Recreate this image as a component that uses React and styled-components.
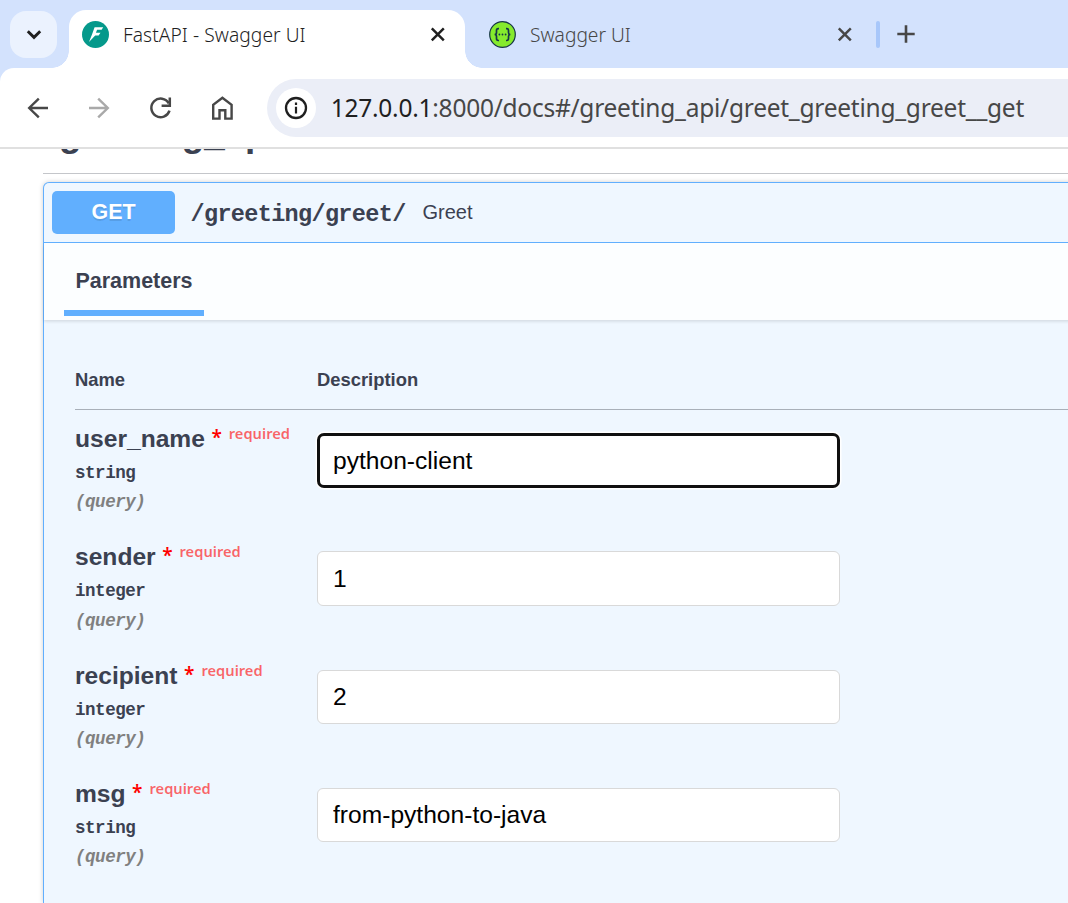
import React from 'react';
import styled, { createGlobalStyle } from 'styled-components';

const GlobalStyle = createGlobalStyle`
  * { box-sizing: border-box; }
  body { margin: 0; overflow: hidden; background: #fff; }
`;

const UI_FONT = '"Noto Sans", "Open Sans", sans-serif';
const SANS = '"Liberation Sans", Arial, sans-serif';
const MONO = '"Liberation Mono", monospace';

const Window = styled.div`
  width: 1068px;
  height: 903px;
  overflow: hidden;
  display: flex;
  flex-direction: column;
  font-family: ${SANS};
  color: #3b4151;
`;

const TabStrip = styled.header`
  flex: none;
  height: 68px;
  display: flex;
  align-items: flex-start;
  background: #d3e2fd;
  padding: 10px 0 0 10px;
`;

const TabSearch = styled.button`
  width: 47px;
  height: 47px;
  margin: 1px 12px 0 0;
  padding: 0;
  border: 0;
  border-radius: 16px;
  background: #ebf2fe;
  display: flex;
  align-items: center;
  justify-content: center;
`;

const Tab = styled.div`
  position: relative;
  display: flex;
  align-items: center;
  width: ${(p) => (p.$active ? 396 : 407)}px;
  height: 58px;
  padding: 0 18px 9px ${(p) => (p.$active ? 13 : 24)}px;
  border-radius: 17px 17px 0 0;
  background: ${(p) => (p.$active ? '#fff' : 'transparent')};
  color: ${(p) => (p.$active ? '#1f1f1f' : '#474747')};
`;

const TabFlare = styled.span`
  position: absolute;
  bottom: 0;
  width: 17px;
  height: 17px;
  ${(p) => (p.$side === 'left' ? 'left: -17px;' : 'right: -17px;')}
  background: radial-gradient(
    circle at ${(p) => (p.$side === 'left' ? '0 0' : '100% 0')},
    transparent 16.5px,
    #fff 17px
  );
`;

const TabTitle = styled.span`
  flex: 1;
  margin-left: 14px;
  font: 300 19.2px/28px ${UI_FONT};
  letter-spacing: ${(p) => p.$track || 0}px;
  white-space: nowrap;
`;

const TabDivider = styled.span`
  width: 4px;
  height: 27px;
  margin: 11px 17px 0 4px;
  border-radius: 2px;
  background: #a8c7fa;
`;

const NewTab = styled.span`
  display: flex;
  margin-top: 15px;
`;

const ToolbarBack = styled.div`
  flex: none;
  background: #d3e2fd;
`;

const Toolbar = styled.nav`
  height: 81px;
  display: flex;
  align-items: center;
  padding: 1px 0 0 22px;
  border-bottom: 2px solid #e0e0e0;
  border-top-left-radius: 14px;
  background: #fff;
`;

const NavButton = styled.span`
  width: 32px;
  height: 32px;
  margin-right: 29.2px;
  display: flex;
  color: ${(p) => (p.$dim ? '#a9a9a9' : '#474747')};
`;

const Omnibox = styled.div`
  flex: 1;
  height: 58px;
  display: flex;
  align-items: center;
  padding-left: 9px;
  border-radius: 29px 0 0 29px;
  background: #ebeef7;
`;

const SiteInfo = styled.span`
  width: 40px;
  height: 40px;
  margin-right: 15px;
  border-radius: 50%;
  background: #fff;
  display: flex;
  align-items: center;
  justify-content: center;
`;

const Url = styled.span`
  font: 400 24.5px/34px ${UI_FONT};
  letter-spacing: -0.25px;
  white-space: nowrap;
  color: #474747;
`;

const Host = styled.span`
  color: #1f1f1f;
`;

const Page = styled.main`
  flex: 1;
  min-height: 0;
  overflow: hidden;
  display: flex;
  flex-direction: column;
  padding-left: 43px;
`;

const TagHeading = styled.h3`
  flex: none;
  height: 56px;
  margin: -31px 0 8px;
  padding-left: 16px;
  border-bottom: 1px solid #c4c6ca;
  font: 700 36.8px/31px ${SANS};
`;

const Operation = styled.section`
  flex: 1;
  width: 1100px;
  border: 1px solid #61affe;
  border-bottom: 0;
  border-radius: 6px 0 0 0;
  background: #eff7ff;
  box-shadow: 0 0 5px rgba(0, 0, 0, 0.19);
`;

const Summary = styled.div`
  display: flex;
  height: 60px;
  padding: 8px 0 0 8px;
  border-bottom: 1px solid #61affe;
`;

const Method = styled.span`
  width: 123px;
  height: 43px;
  border-radius: 5px;
  background: #61affe;
  color: #fff;
  text-align: center;
  text-shadow: 0 1.5px 0 rgba(0, 0, 0, 0.1);
  font: 700 21.4px/42px ${SANS};
`;

const Path = styled.span`
  width: 232px;
  padding-left: 15.5px;
  font: 700 23.5px/48px ${MONO};
  letter-spacing: -0.66px;
`;

const SummaryText = styled.span`
  padding-left: 15.5px;
  font: 400 20px/42px ${SANS};
`;

const SectionHeader = styled.div`
  height: 77px;
  padding-left: 20px;
  background: rgba(255, 255, 255, 0.8);
  box-shadow: 0 1.5px 3px rgba(0, 0, 0, 0.12);
`;

const SectionTab = styled.h4`
  width: 140px;
  height: 73px;
  margin: 0;
  padding-top: 18px;
  border-bottom: 6px solid #61affe;
  text-align: center;
  font: 700 21.5px/40px ${SANS};
`;

const Params = styled.div`
  padding: 45px 0 0 31px;
`;

const Row = styled.div`
  display: grid;
  grid-template-columns: 242px 523px;
`;

const HeadRow = styled(Row)`
  height: 45px;
  margin-bottom: 14px;
  border-bottom: 1px solid #a9b0b9;
  font: 700 18.4px/30px ${SANS};
`;

const ParamRow = styled(Row)`
  height: 118.34px;
  align-items: start;
`;

const ParamName = styled.div`
  display: flex;
  font: 700 24.6px/30px ${SANS};
`;

const Star = styled.span`
  margin-left: 6.5px;
  font: 600 19px/27px ${UI_FONT};
  color: #f00;
`;

const Required = styled.span`
  margin-left: 7px;
  font: 600 14.7px/18px ${UI_FONT};
  color: rgba(255, 0, 0, 0.6);
`;

const ParamType = styled.div`
  margin-top: 4px;
  font: 700 17.5px/30px ${MONO};
  letter-spacing: -0.45px;
`;

const ParamIn = styled.div`
  margin-top: -0.6px;
  font: italic 700 17.5px/30px ${MONO};
  letter-spacing: -0.45px;
  color: #808080;
`;

const Field = styled.input`
  display: block;
  width: 523px;
  height: 54.5px;
  margin-top: 9px;
  padding: 0 15px;
  border: 1px solid #d9d9d9;
  border-radius: 6px;
  outline: none;
  background: #fff;
  color: #000;
  font: 400 24.6px/30px ${SANS};
  ${(p) =>
    p.$focused &&
    `
    height: 55px;
    border: 3px solid #101010;
    border-radius: 7px;
    padding: 0 13px;
    box-shadow: 0 0 0 1.5px #fff;
  `}
`;

const PARAMS = [
  { name: 'user_name', type: 'string', value: 'python-client', focused: true },
  { name: 'sender', type: 'integer', value: '1' },
  { name: 'recipient', type: 'integer', value: '2' },
  { name: 'msg', type: 'string', value: 'from-python-to-java' },
];

function Cross({ color }) {
  return (
    <svg width="18" height="18" viewBox="0 0 18 18" fill="none" stroke={color} strokeWidth="2.5">
      <path d="M2.8 2.3l12 12M14.8 2.3L2.8 14.3" />
    </svg>
  );
}

function FastApiLogo() {
  return (
    <svg width="27" height="27" viewBox="0 0 27 27">
      <circle cx="13.5" cy="13.5" r="13.5" fill="#05998b" />
      <path d="M12.6 6.2h8.6l-1.6 2.5h-4.5l-1.2 3h4.6l-1.9 2.9h-3.4L7 21l2.9-7.2z" fill="#fff" />
    </svg>
  );
}

function SwaggerLogo() {
  return (
    <svg width="27" height="27" viewBox="0 0 27 27">
      <circle cx="13.5" cy="13.5" r="12.8" fill="#85ea2d" stroke="#173647" strokeWidth="1.2" />
      <g fill="none" stroke="#173647" strokeWidth="1.7">
        <path d="M10 7.6H9.2q-1.7 0-1.7 1.8v2q0 2.1-1.9 2.1 1.9 0 1.9 2.1v2q0 1.9 1.7 1.9h.8" />
        <path d="M17 7.6h.8q1.7 0 1.7 1.8v2q0 2.1 1.9 2.1-1.9 0-1.9 2.1v2q0 1.9-1.7 1.9H17" />
      </g>
      <g fill="#173647">
        <circle cx="10.4" cy="13.5" r="0.9" />
        <circle cx="13.5" cy="13.5" r="0.9" />
        <circle cx="16.6" cy="13.5" r="0.9" />
      </g>
    </svg>
  );
}

function Arrow({ forward }) {
  return (
    <svg width="32" height="32" viewBox="0 0 32 32" fill="none" stroke="currentColor" strokeWidth="2.4">
      <path
        d="M26 16H7.5M16.8 6.6L7.2 16l9.6 9.4"
        transform={forward ? 'translate(32 0) scale(-1 1)' : undefined}
      />
    </svg>
  );
}

export default function App() {
  return (
    <Window>
      <GlobalStyle />
      <TabStrip>
        <TabSearch>
          <svg width="18" height="18" viewBox="0 0 18 18" fill="none" stroke="#1f1f1f" strokeWidth="2.9">
            <path d="M2.8 5.3L9 11.4l6.2-6.1" />
          </svg>
        </TabSearch>
        <Tab $active>
          <TabFlare $side="left" />
          <FastApiLogo />
          <TabTitle $track={0.06}>FastAPI - Swagger UI</TabTitle>
          <Cross color="#1f1f1f" />
          <TabFlare $side="right" />
        </Tab>
        <Tab>
          <SwaggerLogo />
          <TabTitle>Swagger UI</TabTitle>
          <Cross color="#474747" />
        </Tab>
        <TabDivider />
        <NewTab>
          <svg width="18" height="18" viewBox="0 0 18 18" fill="none" stroke="#474747" strokeWidth="2.6">
            <path d="M9 .3v17.4M.3 9h17.4" />
          </svg>
        </NewTab>
      </TabStrip>
      <ToolbarBack>
        <Toolbar>
          <NavButton>
            <Arrow />
          </NavButton>
          <NavButton $dim>
            <Arrow forward />
          </NavButton>
          <NavButton>
            <svg width="32" height="32" viewBox="0 0 32 32" fill="none" stroke="currentColor" strokeWidth="2.5">
              <path d="M25.5 18.6A9.3 9.3 0 1 1 24.8 11.4" />
              <path d="M25.8 5.6v8.1h-8.2" />
            </svg>
          </NavButton>
          <NavButton>
            <svg width="32" height="32" viewBox="0 0 32 32" fill="none" stroke="currentColor" strokeWidth="2.4">
              <path d="M7.2 26.6V12.8L16.4 5.8l9.2 7v13.8h-6.3v-8.4h-5.8v8.4z" />
            </svg>
          </NavButton>
          <Omnibox>
            <SiteInfo>
              <svg width="24" height="24" viewBox="0 0 24 24">
                <circle cx="12" cy="12" r="10" fill="none" stroke="#1f1f1f" strokeWidth="2.3" />
                <path d="M10.9 10.8h2.2v6.6h-2.2zM10.9 6.6h2.2v2.3h-2.2z" fill="#1f1f1f" />
              </svg>
            </SiteInfo>
            <Url>
              <Host>127.0.0.1</Host>:8000/docs#/greeting_api/greet_greeting_greet__get
            </Url>
          </Omnibox>
        </Toolbar>
      </ToolbarBack>
      <Page>
        <TagHeading>greeting_api</TagHeading>
        <Operation>
          <Summary>
            <Method>GET</Method>
            <Path>/greeting/greet/</Path>
            <SummaryText>Greet</SummaryText>
          </Summary>
          <SectionHeader>
            <SectionTab>Parameters</SectionTab>
          </SectionHeader>
          <Params>
            <HeadRow>
              <span>Name</span>
              <span>Description</span>
            </HeadRow>
            {PARAMS.map((p) => (
              <ParamRow key={p.name}>
                <div>
                  <ParamName>
                    {p.name}
                    <Star>*</Star>
                    <Required>required</Required>
                  </ParamName>
                  <ParamType>{p.type}</ParamType>
                  <ParamIn>(query)</ParamIn>
                </div>
                <Field $focused={p.focused} defaultValue={p.value} />
              </ParamRow>
            ))}
          </Params>
        </Operation>
      </Page>
    </Window>
  );
}
